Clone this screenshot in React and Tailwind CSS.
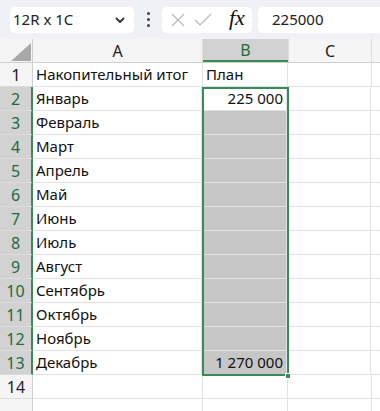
import React from "react";

const months = [
  "Январь",
  "Февраль",
  "Март",
  "Апрель",
  "Май",
  "Июнь",
  "Июль",
  "Август",
  "Сентябрь",
  "Октябрь",
  "Ноябрь",
  "Декабрь",
];

const font = { fontFamily: "'Noto Sans', 'Open Sans', sans-serif" };

// row header cell
const RowHead = ({ n, selected }) => (
  <div
    className={
      "w-[33px] shrink-0 h-full flex items-center justify-center text-[16px] border-b border-[#dcdcdc] " +
      (selected
        ? "bg-[#d2d2d2] text-[#1e6b3f] border-r-2 border-r-[#3a8a58]"
        : "bg-[#f5f5f5] text-[#222] border-r border-r-[#cfcfcf]")
    }
  >
    {n}
  </div>
);

const Toolbar = () => (
  <div className="h-[39px] bg-[#eef1f5] flex items-center pl-[10px] gap-0">
    <div className="w-[124px] h-[26px] bg-white rounded-[5px] flex items-center justify-between pl-[3px] pr-[8px]">
      <span className="text-[15px] text-[#222]">12R x 1C</span>
      <svg width="12" height="12" viewBox="0 0 12 12">
        <path d="M2.5 4.5 L6 8 L9.5 4.5" fill="none" stroke="#333" strokeWidth="1.8" strokeLinecap="round" strokeLinejoin="round" />
      </svg>
    </div>
    <div className="w-[28px] flex flex-col items-center justify-center gap-[3px]">
      <span className="w-[3px] h-[3px] rounded-full bg-[#444]" />
      <span className="w-[3px] h-[3px] rounded-full bg-[#444]" />
      <span className="w-[3px] h-[3px] rounded-full bg-[#444]" />
    </div>
    <div className="w-[90px] h-[26px] bg-white rounded-[5px] flex items-center pl-[9px] gap-[9px]">
      <svg width="14" height="14" viewBox="0 0 14 14">
        <path d="M1 1 L13 13 M13 1 L1 13" stroke="#b8b8b8" strokeWidth="1.2" />
      </svg>
      <svg width="18" height="14" viewBox="0 0 18 14">
        <path d="M1 7 L6 12 L17 1" fill="none" stroke="#b8b8b8" strokeWidth="1.2" />
      </svg>
      <span
        className="text-[22px] italic leading-none text-[#111] ml-[8px] -mt-[3px]"
        style={{ fontFamily: "'Liberation Serif', 'DejaVu Serif', serif" }}
      >
        fx
      </span>
    </div>
    <div className="ml-[6px] flex-1 h-[26px] bg-white rounded-l-[5px] flex items-center pl-[14px]">
      <span className="text-[15px] text-[#222]">225000</span>
    </div>
  </div>
);

const Cell = ({ w, children, right, className = "" }) => (
  <div
    className={
      "shrink-0 h-full border-b border-r border-[#e2e2e2] flex items-center text-[15px] text-[#111] px-[3px] whitespace-nowrap overflow-visible " +
      (right ? "justify-end " : "") +
      className
    }
    style={{ width: w }}
  >
    {children}
  </div>
);

export default function App() {
  const rows = [];
  rows.push({ n: 1, a: "Накопительный итог", b: "План" });
  months.forEach((m, i) => rows.push({ n: i + 2, a: m, b: "" }));
  rows.push({ n: 14, a: "", b: "" });

  return (
    <div className="w-[380px] h-[411px] overflow-hidden bg-white" style={font}>
      <Toolbar />
      {/* column headers */}
      <div className="h-[24px] flex bg-[#f5f5f5] border-b border-[#cfcfcf]">
        <div className="w-[33px] shrink-0 h-full border-r border-[#cfcfcf] flex items-end justify-end pr-[1px] pb-[1px]">
          <svg width="20" height="18" viewBox="0 0 20 18">
            <path d="M20 0 L20 18 L0 18 Z" fill="#a9a9a9" />
          </svg>
        </div>
        <div className="w-[170px] shrink-0 h-full border-r border-[#dcdcdc] flex items-center justify-center text-[16px] text-[#222]">
          A
        </div>
        <div className="w-[85px] shrink-0 h-full bg-[#d2d2d2] border-b-2 border-[#3a8a58] flex items-center justify-center text-[16px] text-[#1e6b3f]">
          B
        </div>
        <div className="w-[84px] shrink-0 h-full border-l border-r border-[#dcdcdc] flex items-center justify-center text-[16px] text-[#222]">
          C
        </div>
        <div className="flex-1" />
      </div>
      {/* grid */}
      <div className="relative">
        {rows.map((r) => {
          const sel = r.n >= 2 && r.n <= 13;
          const gray = r.n >= 3 && r.n <= 13;
          return (
            <div key={r.n} className="h-[24px] flex">
              <RowHead n={r.n} selected={sel} />
              <Cell w={sel ? 169 : 170}>{r.a}</Cell>
              <Cell
                w={85}
                right={r.n !== 1}
                className={gray ? "bg-[#c6c6c6] border-[#b8b8b8]" : ""}
              >
                {r.n === 1 ? "План" : r.n === 2 ? "225 000" : r.n === 13 ? "1 270 000" : ""}
              </Cell>
              <Cell w={84} />
              <div className="flex-1 border-b border-[#e2e2e2]" />
            </div>
          );
        })}
        {/* partially visible next row */}
        <div className="h-[24px] flex">
          <div className="w-[33px] shrink-0 h-full bg-[#f5f5f5] border-r border-[#cfcfcf]" />
          <div className="w-[170px] shrink-0 h-full border-r border-[#e2e2e2]" />
          <div className="w-[85px] shrink-0 h-full border-r border-[#e2e2e2]" />
          <div className="w-[84px] shrink-0 h-full border-r border-[#e2e2e2]" />
        </div>
        {/* selection outline B2:B13 */}
        <div className="absolute left-[202px] top-[24px] w-[87px] h-[289px] border-2 border-[#3a8a58] pointer-events-none" />
        <div className="absolute left-[285px] top-[310px] w-[6px] h-[6px] bg-[#3a8a58] border border-white" />
      </div>
    </div>
  );
}
